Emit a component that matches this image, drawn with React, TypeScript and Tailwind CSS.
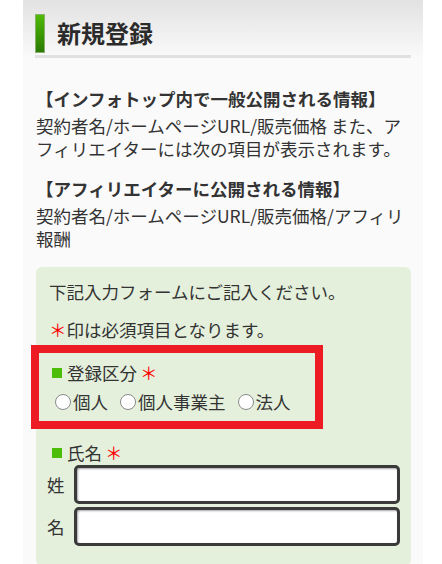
import type { ReactNode } from 'react';

const FONT = '"Noto Sans CJK JP", "Noto Sans", sans-serif';

// 公開情報の説明ブロック
const NOTICES = [
  {
    title: '【インフォトップ内で一般公開される情報】',
    body: '契約者名/ホームページURL/販売価格 また、アフィリエイターには次の項目が表示されます。',
  },
  {
    title: '【アフィリエイターに公開される情報】',
    body: '契約者名/ホームページURL/販売価格/アフィリ報酬',
  },
];

const ENTRY_TYPES = ['個人', '個人事業主', '法人'];

function Required() {
  return <span className="text-[#ff0000] ml-[3px]">＊</span>;
}

function FieldLabel({ children }: { children: ReactNode }) {
  return (
    <div className="flex items-center h-[23px]">
      <span className="w-[10px] h-[10px] bg-[#4cbd08] mr-[5px]" />
      <span>{children}</span>
      <Required />
    </div>
  );
}

function Radio({ label }: { label: string }) {
  return (
    <label className="flex items-center mr-[12px]">
      <span className="w-[16px] h-[16px] rounded-full border border-[#8a8a8a] bg-white mr-[2px] shrink-0" />
      <span>{label}</span>
    </label>
  );
}

function NameInput({ label }: { label: string }) {
  return (
    <div className="flex items-center">
      <span className="w-[38px] pl-[11px]">{label}</span>
      <div className="flex-1 h-[39px] rounded-[5px] border-[3px] border-[#3a3a3a] bg-white shadow-[inset_1px_1px_2px_rgba(0,0,0,0.35)]" />
    </div>
  );
}

export default function App() {
  return (
    <div className="min-h-[564px] bg-white" style={{ fontFamily: FONT }}>
      <div className="relative mx-[23px] w-[400px] min-h-[564px] bg-[#fafafa] text-[#333] overflow-hidden">
        {/* ヘッダー部のグラデーション */}
        <div className="bg-gradient-to-b from-[#e2e2e2] to-[#fafafa] pt-[13px] pl-[12px] pr-[12px]">
          <div className="flex items-center h-[40px]">
            <span className="w-[10px] h-[39px] border border-[#86b06c] bg-gradient-to-b from-[#4dbb06] to-[#2b7a00]" />
            <h1 className="ml-[12px] text-[24px] font-bold text-[#2b2b2b] leading-none">新規登録</h1>
          </div>
          <div className="mt-[2px] h-[3px] bg-[#dfe2df]" />
        </div>

        <div className="pl-[13px] pr-[12px] pt-[29px] text-[17.5px] leading-[23px]">
          {NOTICES.map((n, i) => (
            <div key={i} className={i > 0 ? 'mt-[17px]' : ''}>
              <p className="font-bold mb-[4px]">{n.title}</p>
              <p>{n.body}</p>
            </div>
          ))}

          <div className="mt-[17px] rounded-[6px] bg-[#e4f0dc] pl-[13px] pr-[10px] pt-[13px] pb-[20px]">
            <p>下記入力フォームにご記入ください。</p>
            <p className="mt-[15px]">
              <span className="text-[#ff0000]">＊</span>印は必須項目となります。
            </p>

            <div className="mt-[20px] pl-[3px]">
              <FieldLabel>登録区分</FieldLabel>
              <div className="flex items-center mt-[6px] h-[23px] pl-[3px]">
                {ENTRY_TYPES.map(t => (
                  <Radio key={t} label={t} />
                ))}
              </div>
            </div>

            <div className="mt-[28px] pl-[3px]">
              <FieldLabel>氏名</FieldLabel>
            </div>
            <div className="-ml-[13px] pr-[1px] flex flex-col gap-[3px] mt-[1px]">
              <NameInput label="姓" />
              <NameInput label="名" />
            </div>
          </div>
        </div>

        {/* 登録区分を囲む赤枠 */}
        <div className="absolute left-[8px] top-[345px] w-[292px] h-[84px] border-[8px] border-[#ed1c24]" />
      </div>
    </div>
  );
}
